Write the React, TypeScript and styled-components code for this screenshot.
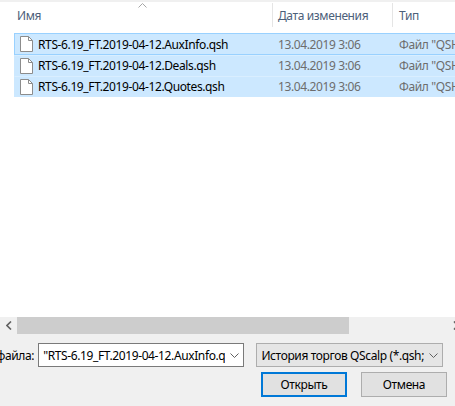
import React from "react";
import styled, { createGlobalStyle } from "styled-components";

const GlobalStyle = createGlobalStyle`
  html, body { margin: 0; padding: 0; background: #f0f0f0; }
  body {
    font-family: "Noto Sans", "Segoe UI", Arial, sans-serif;
    font-size: 12px;
    letter-spacing: -0.38px;
  }
`;

const Window = styled.div`
  width: 455px;
  height: 406px;
  overflow: hidden;
  background: #f0f0f0;
  display: flex;
  flex-direction: column;
`;

const ListPane = styled.div`
  width: 464px;
  height: 317px;
  background: #ffffff;
  display: flex;
  flex-direction: column;
  flex-shrink: 0;
`;

const TopEdge = styled.div`
  height: 2px;
  background: #f0f0f0;
`;

const Header = styled.div`
  display: grid;
  grid-template-columns: 272px 120px 1fr;
  height: 28px;
  color: #4c607a;
`;

const HeaderCell = styled.div<{ $pad: number; $sep?: boolean }>`
  position: relative;
  display: flex;
  align-items: center;
  padding-left: ${(p) => p.$pad}px;
  border-left: ${(p) => (p.$sep ? "1px solid #e5e5e5" : "none")};
  margin: 1px 0 3px;
  white-space: nowrap;
`;

const SortArrow = styled.svg`
  position: absolute;
  left: 138px;
  top: 0px;
`;

const RowList = styled.div`
  display: flex;
  flex-direction: column;
  padding: 3px 0 0 14px;
`;

const Row = styled.div<{ $h: number; $focused?: boolean }>`
  display: grid;
  grid-template-columns: 258px 120px 1fr;
  height: ${(p) => p.$h}px;
  box-sizing: border-box;
  background: #cce8ff;
  border: 1px solid ${(p) => (p.$focused ? "#99d1ff" : "#cce8ff")};
  border-top-color: ${(p) => (p.$focused ? "#99d1ff" : "#d9eeff")};
  align-items: center;
  white-space: nowrap;
`;

const NameCell = styled.div`
  display: flex;
  align-items: center;
  gap: 5px;
  padding-left: 5px;
  color: #000;
`;

const DateCell = styled.div`
  padding-left: 5px;
  color: #6d6d6d;
`;

const TypeCell = styled.div`
  padding-left: 6px;
  color: #6d6d6d;
`;

const Scrollbar = styled.div`
  width: 464px;
  height: 17px;
  display: flex;
  background: #f0f0f0;
  flex-shrink: 0;
`;

const ScrollButton = styled.div`
  width: 17px;
  height: 17px;
  display: flex;
  align-items: center;
  justify-content: center;
  flex-shrink: 0;
`;

const Track = styled.div`
  width: 430px;
  display: flex;
`;

const Thumb = styled.div`
  width: 332px;
  height: 17px;
  background: #cdcdcd;
`;

const BottomPanel = styled.div`
  display: flex;
  flex-direction: column;
  padding-top: 9px;
  gap: 5px;
`;

const FieldRow = styled.div`
  display: flex;
  align-items: center;
  height: 24px;
`;

const Label = styled.div`
  width: 36px;
  display: flex;
  justify-content: flex-end;
  overflow: hidden;
  white-space: nowrap;
  color: #000;
  margin-right: 4px;
`;

const Combo = styled.div<{ $w: number; $variant: "edit" | "list" }>`
  width: ${(p) => p.$w}px;
  height: 24px;
  box-sizing: border-box;
  display: flex;
  align-items: center;
  border: 1px solid ${(p) => (p.$variant === "edit" ? "#7a7a7a" : "#adadad")};
  background: ${(p) => (p.$variant === "edit" ? "#ffffff" : "#e5e5e5")};
  padding-left: 4px;
  margin-right: 12px;
  color: #000;
`;

const ComboText = styled.div`
  flex: 1;
  overflow: hidden;
  white-space: nowrap;
`;

const Chevron = styled.div`
  width: 18px;
  display: flex;
  align-items: center;
  justify-content: center;
  flex-shrink: 0;
`;

const ButtonRow = styled.div`
  display: flex;
  gap: 14px;
  padding-left: 261px;
`;

const Button = styled.div<{ $default?: boolean }>`
  width: 86px;
  height: 25px;
  box-sizing: border-box;
  display: flex;
  align-items: center;
  justify-content: center;
  background: #e1e1e1;
  border: ${(p) => (p.$default ? "2px solid #0078d7" : "1px solid #adadad")};
  color: #000;
`;

const FileIcon = () => (
  <svg width="13" height="16" viewBox="0 0 13 16">
    <path d="M0.5 0.5 H8.5 L12.5 4.5 V15.5 H0.5 Z" fill="#ffffff" stroke="#8c8c8c" />
    <path d="M8.5 0.5 V4.5 H12.5" fill="none" stroke="#8c8c8c" />
  </svg>
);

const DownChevron = () => (
  <svg width="9" height="5" viewBox="0 0 9 5">
    <path d="M0.5 0.5 L4.5 4.5 L8.5 0.5" fill="none" stroke="#606060" />
  </svg>
);

const files = [
  { name: "RTS-6.19_FT.2019-04-12.AuxInfo.qsh", h: 22, focused: true },
  { name: "RTS-6.19_FT.2019-04-12.Deals.qsh", h: 21 },
  { name: "RTS-6.19_FT.2019-04-12.Quotes.qsh", h: 21 },
];

export default function App() {
  return (
    <Window>
      <GlobalStyle />
      <ListPane>
        <TopEdge />
        <Header>
          <HeaderCell $pad={17}>
            Имя
            <SortArrow width="9" height="5" viewBox="0 0 9 5">
              <path d="M0.5 4.5 L4.5 0.5 L8.5 4.5" fill="none" stroke="#a6a6a6" />
            </SortArrow>
          </HeaderCell>
          <HeaderCell $pad={5} $sep>Дата изменения</HeaderCell>
          <HeaderCell $pad={6} $sep>Тип</HeaderCell>
        </Header>
        <RowList>
          {files.map((f) => (
            <Row key={f.name} $h={f.h} $focused={f.focused}>
              <NameCell>
                <FileIcon />
                {f.name}
              </NameCell>
              <DateCell>13.04.2019 3:06</DateCell>
              <TypeCell>Файл "QSH"</TypeCell>
            </Row>
          ))}
        </RowList>
      </ListPane>
      <Scrollbar>
        <ScrollButton>
          <svg width="6" height="9" viewBox="0 0 6 9">
            <path d="M5 0.5 L1 4.5 L5 8.5" fill="none" stroke="#606060" strokeWidth="1.6" />
          </svg>
        </ScrollButton>
        <Track>
          <Thumb />
        </Track>
        <ScrollButton>
          <svg width="6" height="9" viewBox="0 0 6 9">
            <path d="M1 0.5 L5 4.5 L1 8.5" fill="none" stroke="#606060" strokeWidth="1.6" />
          </svg>
        </ScrollButton>
      </Scrollbar>
      <BottomPanel>
        <FieldRow>
          <Label>Имя файла:</Label>
          <Combo $w={207} $variant="edit">
            <ComboText>"RTS-6.19_FT.2019-04-12.AuxInfo.q</ComboText>
            <Chevron>
              <DownChevron />
            </Chevron>
          </Combo>
          <Combo $w={190} $variant="list">
            <ComboText>История торгов QScalp (*.qsh;</ComboText>
            <Chevron>
              <DownChevron />
            </Chevron>
          </Combo>
        </FieldRow>
        <ButtonRow>
          <Button $default>Открыть</Button>
          <Button>Отмена</Button>
        </ButtonRow>
      </BottomPanel>
    </Window>
  );
}
